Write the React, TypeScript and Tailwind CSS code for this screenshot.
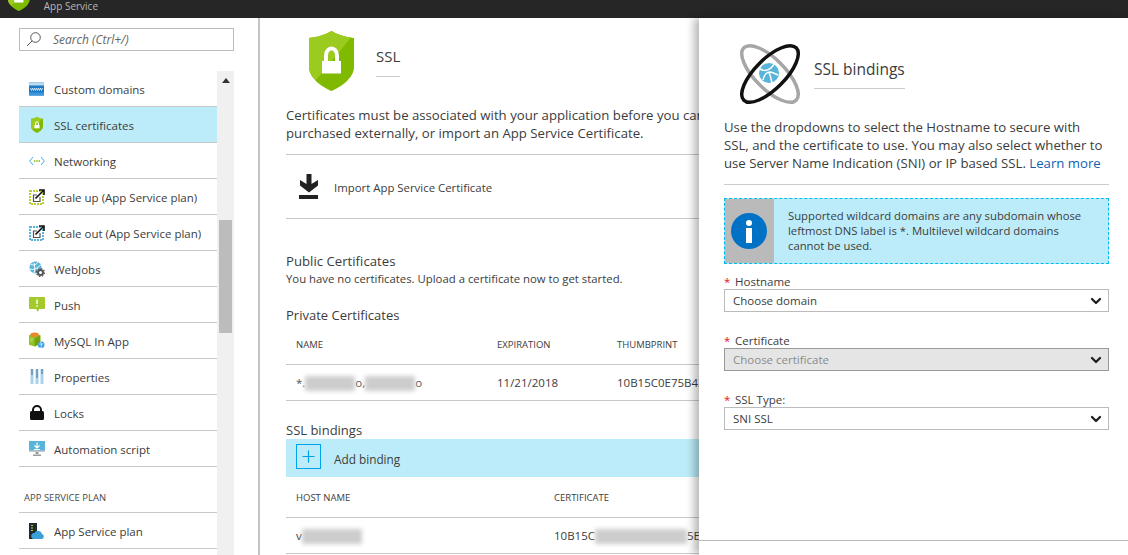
import { ChevronDown, Plus } from "lucide-react";
import type { ReactNode } from "react";

const WwwIcon = () => (
  <svg width="16" height="14" viewBox="0 0 16 14">
    <rect width="15" height="13" y="0.5" fill="#1e78c2" />
    <rect width="15" height="3" y="0.5" fill="#bcd9f0" />
    <rect width="15" height="3" y="10.5" fill="#3a96dd" />
    <path d="M1.5 6l1 2.5 1-2.5 1 2.5 1-2.5M5.5 6l1 2.5 1-2.5 1 2.5 1-2.5M9.5 6l1 2.5 1-2.5 1 2.5 1-2.5" stroke="#fff" strokeWidth="0.7" fill="none" />
  </svg>
);

const Shield = ({ size = 16 }: { size?: number }) => (
  <svg width={size * 0.75} height={size} viewBox="0 0 45 60">
    <path d="M22.5 0 C27 3 36 6 45 7 V36 C45 47 32 56 22.5 60 C13 56 0 47 0 36 V7 C9 6 18 3 22.5 0Z" fill="#7fba00" />
    <path d="M22.5 0 C18 3 9 6 0 7 V36 C0 41 3 46 7 49 L42 6.600 C35 5.500 27 3 22.5 0Z" fill="#9ccb20" />
    <path d="M17 31 V25 C17 15 28 15 28 25 V31" fill="none" stroke="#fff" strokeWidth="4" />
    <rect x="13" y="30" width="19" height="12.500" fill="#fff" />
  </svg>
);

const NetIcon = () => (
  <svg width="16" height="10" viewBox="0 0 16 10">
    <path d="M4 1 L0.700 5 L4 9M12 1 L15.300 5 L12 9" stroke="#3aa0e6" strokeWidth="0.9" fill="none" />
    <path d="M5 5h1.400M7.300 5h1.400M9.600 5h1.400" stroke="#7fba00" strokeWidth="1.400" />
  </svg>
);

const ScaleIcon = ({ color }: { color: string }) => (
  <svg width="16" height="16" viewBox="0 0 16 16">
    <rect x="1" y="2" width="13" height="13" fill="#fff" stroke={color} strokeWidth="2" strokeDasharray="2 1" />
    <path d="M11 8v4.500H4.500V6H8" stroke="#555" strokeWidth="1.200" fill="none" />
    <path d="M6.500 9.500 14 2M10 1h5v5" stroke="#111" strokeWidth="1.600" fill="none" />
  </svg>
);

const WebJobsIcon = () => (
  <svg width="16" height="16" viewBox="0 0 16 16">
    <circle cx="6.500" cy="6.500" r="6" fill="#59b4d9" />
    <path d="M2 3.500c3 1.500 6-.5 7-2.500M1 8c4 1 7 0 10.500-4M5 12c1-3 1-6 0-10M8 6.500l3 5" stroke="#fff" strokeWidth="1" fill="none" />
    <circle cx="11.500" cy="11.500" r="2.500" fill="none" stroke="#555" strokeWidth="2" />
    <circle cx="11.500" cy="11.500" r="4" fill="none" stroke="#555" strokeWidth="1.200" strokeDasharray="1.500 1.600" />
  </svg>
);

const PushIcon = () => (
  <svg width="16" height="15" viewBox="0 0 16 15">
    <path d="M1 0h14a1 1 0 0 1 1 1v10a1 1 0 0 1-1 1h-5l-1 3-2-3H1a1 1 0 0 1-1-1V1a1 1 0 0 1 1-1z" fill="#a4c92b" />
    <path d="M8 2.500v4.500M8 8.200v1.600" stroke="#fff" strokeWidth="1.400" />
  </svg>
);

const MysqlIcon = () => (
  <svg width="17" height="17" viewBox="0 0 17 17">
    <path d="M0 3l6-2 6 2v9l-6 3-6-2z" fill="#8fc31f" />
    <path d="M6 6l6-3v9l-6 3z" fill="#6fa30f" />
    <ellipse cx="6" cy="2.500" rx="4.500" ry="2.500" fill="#ea8a2e" />
    <path d="M1.500 7h3M1.500 9h2" stroke="#dcedb0" strokeWidth="0.800" />
    <circle cx="13" cy="13" r="3.500" fill="#3a9fe0" />
    <path d="M10.500 12c2 1 3.500 0 5 0M12 10c1.500 2 1.500 4 .5 6.500" stroke="#fff" strokeWidth="0.700" fill="none" />
  </svg>
);

const PropsIcon = () => (
  <svg width="14" height="15" viewBox="0 0 14 15">
    <rect x="0.500" width="3" height="15" fill="#a9d3ec" />
    <rect x="5.500" width="3" height="15" fill="#a9d3ec" />
    <rect x="10.500" width="3" height="15" fill="#a9d3ec" />
    <path d="M2 0v6M7 0v9M12 0v5" stroke="#3f6f8f" strokeWidth="1" />
  </svg>
);

const LockIcon = () => (
  <svg width="14" height="15" viewBox="0 0 14 15">
    <path d="M3 7V5a4 4 0 0 1 8 0v2" stroke="#111" strokeWidth="2" fill="none" />
    <rect y="6" width="14" height="9" rx="1.500" fill="#111" />
  </svg>
);

const AutomationIcon = () => (
  <svg width="16" height="15" viewBox="0 0 16 15">
    <rect width="16" height="11" fill="#59b4d9" />
    <rect y="9.500" width="16" height="1.500" fill="#c8c8c8" />
    <path d="M8 1.500v5M5.500 4.500 8 7l2.500-2.500M5 8.500h6" stroke="#fff" strokeWidth="1.100" fill="none" />
    <path d="M6.500 11h3v2h-3zM4 13.500h8V15H4z" fill="#9a9a9a" />
  </svg>
);

const PlanIcon = () => (
  <svg width="16" height="16" viewBox="0 0 16 16">
    <rect width="8" height="16" fill="#1f2a33" />
    <path d="M2 2.500h2M2 5h2M2 7.500h2" stroke="#b4d334" strokeWidth="1" />
    <path d="M5 16a3 3 0 0 1 .5-6 4 4 0 0 1 7.500 1 2.600 2.600 0 0 1 0 5z" fill="#3aa0da" />
  </svg>
);

const navItems: { label: string; icon: ReactNode; active?: boolean }[] = [
  { label: "Custom domains", icon: <WwwIcon /> },
  { label: "SSL certificates", icon: <Shield />, active: true },
  { label: "Networking", icon: <NetIcon /> },
  { label: "Scale up (App Service plan)", icon: <ScaleIcon color="#b4d334" /> },
  { label: "Scale out (App Service plan)", icon: <ScaleIcon color="#59b4d9" /> },
  { label: "WebJobs", icon: <WebJobsIcon /> },
  { label: "Push", icon: <PushIcon /> },
  { label: "MySQL In App", icon: <MysqlIcon /> },
  { label: "Properties", icon: <PropsIcon /> },
  { label: "Locks", icon: <LockIcon /> },
  { label: "Automation script", icon: <AutomationIcon /> },
];

const NavRow = ({ label, icon, active }: { label: string; icon: ReactNode; active?: boolean }) => (
  <div className={`flex h-9 shrink-0 items-center border-b border-[#c8c8c8] ${active ? "bg-[#bcecf9]" : ""}`}>
    <span className="w-[35px] shrink-0 pl-[10px]">
      <span className="flex w-[16px] justify-center">{icon}</span>
    </span>
    <span className="mt-[2px] truncate text-[11.500px] text-[#3c3c3c]">{label}</span>
  </div>
);

const Blur = ({ w }: { w: string }) => (
  <span className={`inline-block h-[15px] bg-[#cdcdcd] align-middle blur-[2px] ${w}`} />
);

const SelectField = ({ label, value, disabled, className }: { label: string; value: string; disabled?: boolean; className: string }) => (
  <div className={className}>
    <div className="flex h-[15px] items-center text-[11.500px] leading-none text-[#3c3c3c]">
      <span className="w-[11px] text-[#e81123]">*</span>
      {label}
    </div>
    <div
      className={`flex h-[23px] items-center justify-between border pl-2 pr-[4px] text-[11.500px] ${
        disabled ? "border-[#999] bg-[#e5e5e5] text-[#8c8c8c]" : "border-[#bbb] bg-white text-[#3c3c3c]"
      }`}
    >
      {value}
      <ChevronDown size={16} strokeWidth={3.500} className="text-[#222]" />
    </div>
  </div>
);

export default function App() {
  return (
    <div className="flex h-[555px] w-[1128px] flex-col overflow-hidden bg-white font-['Open_Sans',sans-serif] text-[#3c3c3c]">
      <div className="flex h-[18px] shrink-0 items-start gap-[14px] overflow-hidden bg-[#262626] pl-[8px]">
        <div className="-mt-[18px]">
          <Shield size={29} />
        </div>
        <span className="text-[10px] leading-[12px] text-[#b8b8b8]">App Service</span>
      </div>

      <div className="flex min-h-0 flex-1">
        <aside className="flex w-[260px] shrink-0 flex-col border-r-2 border-[#c4c4c4] pl-[19px] pr-[24px]">
          <div className="mt-[10px] flex h-[23px] shrink-0 items-center gap-[12px] border border-[#bbb] pl-[6px] text-[12px] italic text-[#666]">
            <svg width="15" height="15" viewBox="0 0 15 15" fill="none" stroke="#555" strokeWidth="1">
              <circle cx="9.500" cy="5.500" r="4.800" />
              <path d="M6 9 1 14" />
            </svg>
            Search (Ctrl+/)
          </div>
          <div className="mt-5 flex min-h-0 flex-1">
            <div className="flex min-w-0 flex-1 flex-col">
              {navItems.map((item) => (
                <NavRow key={item.label} {...item} />
              ))}
              <div className="flex h-[45px] shrink-0 items-end pb-[10px] pl-[5px] text-[9.500px] leading-none text-[#4a4a4a]">
                APP SERVICE PLAN
              </div>
              <div className="border-t border-[#c8c8c8]">
                <NavRow label="App Service plan" icon={<PlanIcon />} />
              </div>
            </div>
            <div className="flex w-[17px] shrink-0 flex-col items-center bg-[#f0f0f0]">
              <svg width="8" height="5" viewBox="0 0 8 5" className="mt-[7px]">
                <path d="M4 0l4 5H0z" fill="#333" />
              </svg>
              <div className="mt-[137px] h-[113px] w-[13px] bg-[#bcbcbc]" />
            </div>
          </div>
        </aside>

        <main className="relative w-[439px] shrink-0 overflow-hidden pl-[26px]">
          <div className="flex h-[88px] items-start pl-[23px] pt-[13px]">
            <Shield size={60} />
            <div className="ml-[22px] mt-[13px] border-b border-[#ccc] pb-[8px] text-[15px] leading-[24px] text-[#3c3c3c]">SSL</div>
          </div>
          <p className="whitespace-nowrap text-[13.200px] leading-[18px]">
            Certificates must be associated with your application before you can upload a certificate
            <br />
            purchased externally, or import an App Service Certificate.
          </p>
          <div className="mt-[12px] flex h-[65px] items-center border-y border-[#c8c8c8]">
            <svg width="20" height="25" viewBox="0 0 20 25" className="ml-[13px]" fill="#222">
              <path d="M7.500 0h5v10l6.500-4v5.500l-9 7-9-7V6l6.500 4z" />
              <rect y="21" width="19" height="4" />
            </svg>
            <span className="ml-[15px] mt-[2px] text-[11.400px]">Import App Service Certificate</span>
          </div>

          <h3 className="mt-[33px] text-[13.200px] leading-[18px]">Public Certificates</h3>
          <p className="text-[11.350px] leading-[18px]">You have no certificates. Upload a certificate now to get started.</p>
          <h3 className="mt-[18px] text-[13px] leading-[18px]">Private Certificates</h3>

          <div className="mt-[11px] grid h-[30px] grid-cols-[201px_120px_1fr] items-center border-b border-[#c8c8c8] pb-[10px] pl-[10px] text-[9.500px] leading-none">
            <span>NAME</span>
            <span>EXPIRATION</span>
            <span>THUMBPRINT</span>
          </div>
          <div className="grid h-9 grid-cols-[201px_120px_1fr] items-center border-b border-[#c8c8c8] pl-[10px] text-[11.500px] whitespace-nowrap">
            <span className="text-[#555]">
              *.
              <Blur w="w-[50px]" />
              o,
              <Blur w="w-[50px]" />
              o
            </span>
            <span>11/21/2018</span>
            <span>10B15C0E75B43A9F</span>
          </div>

          <h3 className="mt-[20px] text-[13px] leading-[18px]">SSL bindings</h3>
          <div className="flex h-[38px] items-start bg-[#bcecf9]">
            <div className="ml-[10px] mt-[5px] flex h-[25px] w-[25px] items-center justify-center border border-[#00a2ed]">
              <Plus size={19} strokeWidth={1.500} className="text-[#00a2ed]" />
            </div>
            <span className="ml-[13px] mt-[12px] text-[11.800px]">Add binding</span>
          </div>
          <div className="grid h-[41px] grid-cols-[258px_1fr] items-center border-b border-[#c8c8c8] pl-[10px] pt-[1px] text-[9.500px] leading-none">
            <span>HOST NAME</span>
            <span>CERTIFICATE</span>
          </div>
          <div className="grid h-9 grid-cols-[258px_1fr] items-center border-b border-[#c8c8c8] pl-[10px] text-[11.500px] whitespace-nowrap">
            <span>
              v
              <Blur w="w-[60px]" />
            </span>
            <span>
              10B15C
              <Blur w="w-[92px]" />
              5E
            </span>
          </div>
        </main>

        <section className="z-10 flex w-[429px] shrink-0 flex-col bg-white pl-[25px] pr-[19px] shadow-[-5px_0_8px_rgba(0,0,0,0.28)]">
          <div className="flex h-[85px] shrink-0 items-start">
            <svg width="62" height="62" viewBox="0 0 62 62" className="ml-[15px] mt-[25px]">
              <ellipse cx="31" cy="31" rx="37" ry="15" transform="rotate(45 31 31)" fill="none" stroke="#a6a6a6" strokeWidth="3.500" />
              <ellipse cx="31" cy="31" rx="37" ry="15" transform="rotate(-45 31 31)" fill="none" stroke="#111" strokeWidth="3.500" />
              <circle cx="30" cy="30" r="10" fill="#59b4d9" />
              <path d="M21 26c5 3 11 1 14-5M24 37c1-5 4-8 7-8 2 0 6 2 8 3M33 40c-1-3-1-6-3-11" stroke="#fff" strokeWidth="1.500" fill="none" />
            </svg>
            <div className="ml-[13px] mt-[38px] border-b border-[#ccc] pb-[6px] text-[15.500px] leading-[26px]">SSL bindings</div>
          </div>
          <p className="whitespace-nowrap pt-[15px] text-[13.200px] leading-[18px]">
            Use the dropdowns to select the Hostname to secure with
            <br />
            SSL, and the certificate to use. You may also select whether to
            <br />
            use Server Name Indication (SNI) or IP based SSL. <span className="text-[#0f5fb3]">Learn more</span>
          </p>
          <div className="mt-[12px] border-t border-[#ccc]" />
          <div className="mt-[13px] flex h-[66px] border border-dashed border-[#00bcf2] bg-[#bcecf9]">
            <div className="flex w-[49px] shrink-0 items-center justify-center bg-[#bababa] pr-[1px]">
              <svg width="36" height="36" viewBox="0 0 36 36">
                <circle cx="18" cy="18" r="18" fill="#0072c6" />
                <circle cx="18" cy="10" r="3" fill="#fff" />
                <rect x="15" y="15" width="6" height="15" fill="#fff" />
              </svg>
            </div>
            <p className="whitespace-nowrap pl-[14px] pt-[9px] text-[11.300px] leading-[15px]">
              Supported wildcard domains are any subdomain whose
              <br />
              leftmost DNS label is *. Multilevel wildcard domains
              <br />
              cannot be used.
            </p>
          </div>
          <SelectField className="mt-[10px]" label="Hostname" value="Choose domain" />
          <SelectField className="mt-[21px]" label="Certificate" value="Choose certificate" disabled />
          <SelectField className="mt-[21px]" label="SSL Type:" value="SNI SSL" />
          <div className="-ml-[25px] -mr-[19px] mt-[110px] border-t border-[#bbb]" />
        </section>
      </div>
    </div>
  );
}
